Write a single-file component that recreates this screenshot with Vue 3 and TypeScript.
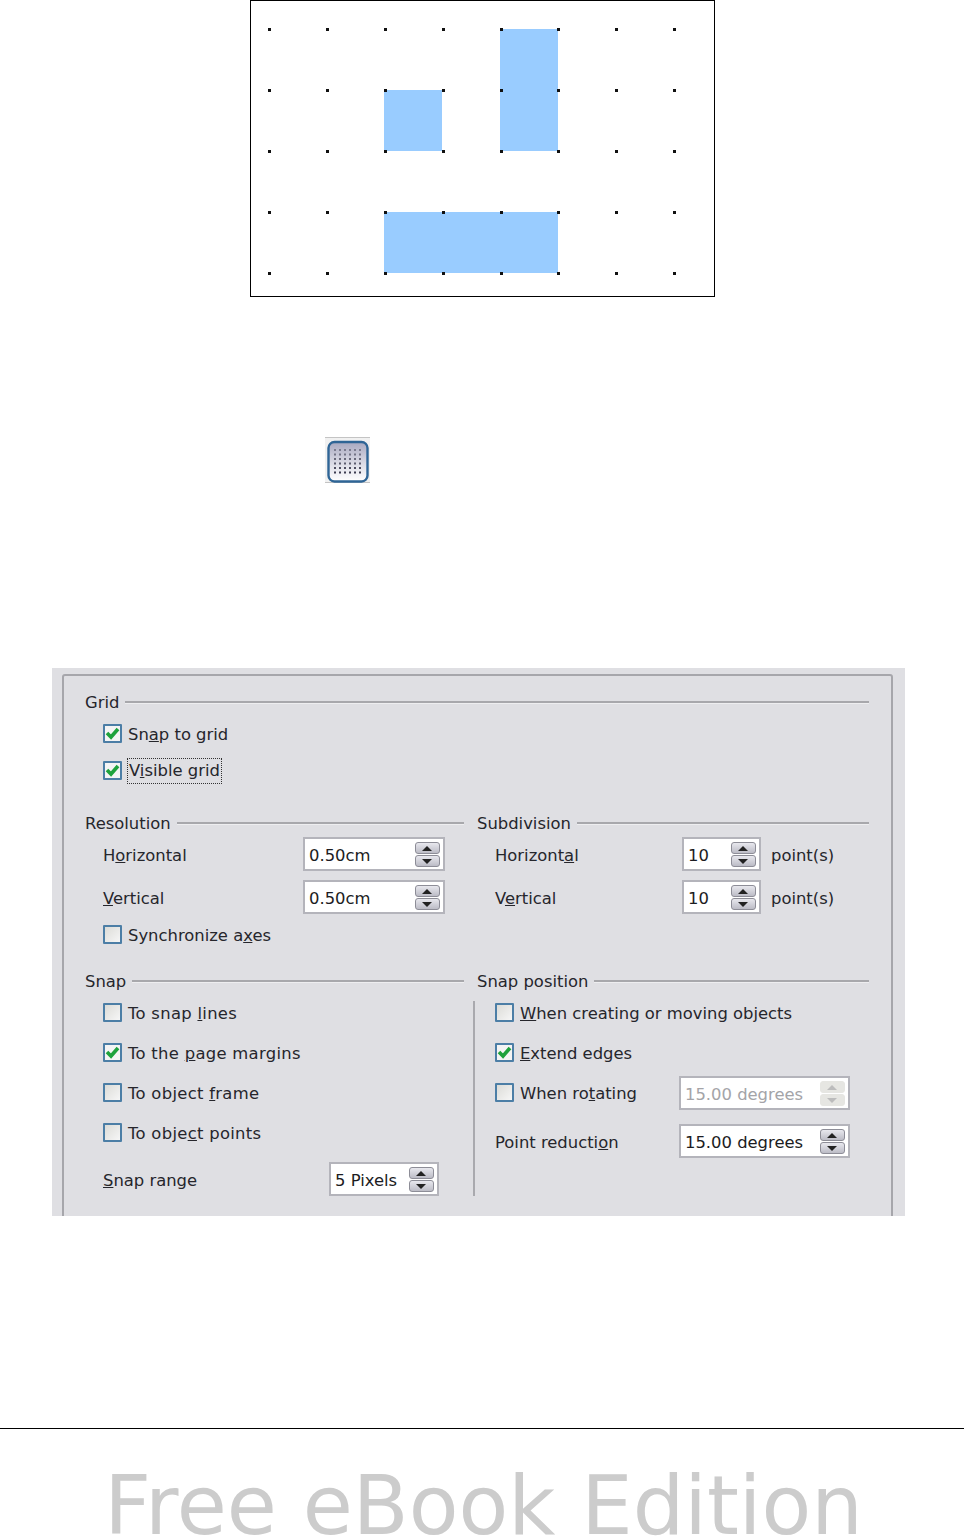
<template>
  <div class="page">
    <div class="figure">
      <svg viewBox="251 1 463 295" width="463" height="295" class="figure-svg">
        <rect x="384" y="90" width="58" height="61" fill="#99ccff" />
        <rect x="500" y="29" width="58" height="122" fill="#99ccff" />
        <rect x="384" y="212" width="174" height="61" fill="#99ccff" />
        <template v-for="y in dotRows" :key="y">
          <rect v-for="x in dotCols" :key="x" :x="x - 1" :y="y - 1" width="3" height="3" fill="#111" />
        </template>
      </svg>
    </div>

    <div class="tool-icon">
      <svg viewBox="0 0 45 46" width="45" height="46">
        <defs>
          <linearGradient id="iconFill" x1="0" y1="0" x2="0" y2="1">
            <stop offset="0" stop-color="#a8a8c0" />
            <stop offset="0.55" stop-color="#dcdce6" />
            <stop offset="1" stop-color="#ffffff" />
          </linearGradient>
        </defs>
        <rect x="0" y="0.5" width="45" height="45" fill="#f1f1f1" />
        <rect x="0" y="0" width="45" height="1" fill="#c4c4c4" />
        <rect x="0" y="45" width="45" height="1" fill="#c4c4c4" />
        <rect x="3.5" y="5" width="39" height="39.5" rx="6" fill="url(#iconFill)" stroke="#2f6596" stroke-width="2.4" />
        <template v-for="(y, i) in iconRows" :key="y">
          <rect v-for="x in iconCols" :key="x" :x="x" :y="y" width="2" height="2" fill="#3c3c50" :opacity="0.5 + i * 0.1" />
        </template>
      </svg>
    </div>

    <div class="dialog">
      <div class="frame">
        <div class="head"><span>Grid</span><i></i></div>
        <div class="grid-rows">
          <div class="check-row">
            <span class="box on"><svg viewBox="0 0 15 15"><path d="M2 7l4 4 7-8" /></svg></span>
            <span class="text">Sn<u>a</u>p to grid</span>
          </div>
          <div class="check-row">
            <span class="box on"><svg viewBox="0 0 15 15"><path d="M2 7l4 4 7-8" /></svg></span>
            <span class="text focused">V<u>i</u>sible grid</span>
          </div>
        </div>

        <div class="columns">
          <section>
            <div class="head"><span>Resolution</span><i></i></div>
            <div class="field-row first">
              <span class="label wide">H<u>o</u>rizontal</span>
              <span class="field res">0.50cm<span class="spin"><b class="up"></b><b class="down"></b></span></span>
            </div>
            <div class="field-row">
              <span class="label wide"><u>V</u>ertical</span>
              <span class="field res">0.50cm<span class="spin"><b class="up"></b><b class="down"></b></span></span>
            </div>
            <div class="check-row sync">
              <span class="box"></span>
              <span class="text">Synchronize a<u>x</u>es</span>
            </div>
          </section>

          <section>
            <div class="head"><span>Subdivision</span><i></i></div>
            <div class="field-row first">
              <span class="label sub">Horizont<u>a</u>l</span>
              <span class="field points">10<span class="spin"><b class="up"></b><b class="down"></b></span></span>
              <span class="unit">point(s)</span>
            </div>
            <div class="field-row">
              <span class="label sub">V<u>e</u>rtical</span>
              <span class="field points">10<span class="spin"><b class="up"></b><b class="down"></b></span></span>
              <span class="unit">point(s)</span>
            </div>
          </section>

          <section>
            <div class="head"><span>Snap</span><i></i></div>
            <div class="snap-rows">
              <div class="check-row tall"><span class="box"></span><span class="text to">To snap <u>l</u>ines</span></div>
              <div class="check-row tall">
                <span class="box on"><svg viewBox="0 0 15 15"><path d="M2 7l4 4 7-8" /></svg></span>
                <span class="text to">To the <u>p</u>age margins</span>
              </div>
              <div class="check-row tall"><span class="box"></span><span class="text to">To object <u>f</u>rame</span></div>
              <div class="check-row tall"><span class="box"></span><span class="text to">To obje<u>c</u>t points</span></div>
              <div class="field-row range">
                <span class="label range-label"><u>S</u>nap range</span>
                <span class="field pixels">5 Pixels<span class="spin"><b class="up"></b><b class="down"></b></span></span>
              </div>
            </div>
          </section>

          <section>
            <div class="head"><span>Snap position</span><i></i></div>
            <div class="snap-rows divided">
              <div class="check-row tall"><span class="box"></span><span class="text"><u>W</u>hen creating or moving objects</span></div>
              <div class="check-row tall">
                <span class="box on"><svg viewBox="0 0 15 15"><path d="M2 7l4 4 7-8" /></svg></span>
                <span class="text"><u>E</u>xtend edges</span>
              </div>
              <div class="check-row tall">
                <span class="box"></span>
                <span class="text rotating">When ro<u>t</u>ating</span>
                <span class="field degrees off">15.00 degrees<span class="spin"><b class="up"></b><b class="down"></b></span></span>
              </div>
              <div class="field-row reduction">
                <span class="label point">Point reducti<u>o</u>n</span>
                <span class="field degrees">15.00 degrees<span class="spin"><b class="up"></b><b class="down"></b></span></span>
              </div>
            </div>
          </section>
        </div>
      </div>
    </div>

    <div class="footer">
      <div class="edition">Free eBook Edition</div>
    </div>
  </div>
</template>

<script setup lang="ts">
const dotCols = [269, 327, 385, 443, 501, 558, 616, 674]
const dotRows = [29, 90, 151, 212, 273]

const iconCols = [9, 14, 19, 24, 29, 34]
const iconRows = [12, 16.5, 21, 25.5, 30, 34.5]
</script>

<style scoped>
.page {
  width: 964px;
  height: 1539px;
  overflow: hidden;
  background: #fff;
  font-family: "DejaVu Sans", sans-serif;
}

.figure {
  box-sizing: border-box;
  width: 465px;
  height: 297px;
  margin-left: 250px;
  border: 1px solid #000;
}

.figure-svg {
  display: block;
}

.tool-icon {
  width: 45px;
  height: 46px;
  margin: 140px 0 0 325px;
}

.tool-icon svg {
  display: block;
}

.dialog {
  box-sizing: border-box;
  width: 853px;
  height: 548px;
  margin: 185px 0 0 52px;
  padding: 6px 12px 0 10px;
  overflow: hidden;
  background: #dfdfe3;
  color: #26262c;
  font-size: 16.4px;
}

.frame {
  box-sizing: border-box;
  height: 560px;
  padding: 14px 22px 0 21px;
  border: 2px solid #a6a6ab;
  border-radius: 3px;
}

.head {
  display: flex;
  align-items: center;
  gap: 6px;
  height: 24px;
}

.head i {
  flex: 1;
  height: 3px;
  background: #a8a8ac;
  border-bottom: 1px solid #eeeef0;
  box-sizing: border-box;
}

.grid-rows {
  display: flex;
  flex-direction: column;
  gap: 1px;
  margin-top: 1px;
  padding-left: 18px;
}

.check-row {
  display: flex;
  align-items: center;
  gap: 6px;
  height: 36px;
  white-space: nowrap;
}

.text {
  padding-top: 2px;
}

.text.to {
  letter-spacing: 0.3px;
}

.box {
  box-sizing: border-box;
  flex: none;
  width: 19px;
  height: 19px;
  border: 2px solid #4c7ea6;
  border-radius: 1px;
  background: linear-gradient(135deg, #dcdcd8, #f6f6f6);
}

.box.on {
  background: #f4f4f4;
}

.box svg {
  display: block;
  width: 15px;
  height: 15px;
}

.box path {
  fill: none;
  stroke: #1ea23c;
  stroke-width: 3.6;
}

.focused {
  padding: 0 1px;
  outline: 1px dotted #333;
  line-height: 24px;
  margin-top: 2px;
}

.columns {
  display: grid;
  grid-template-columns: 379fr 392fr;
  column-gap: 13px;
  row-gap: 22px;
  margin-top: 23px;
}

.field-row {
  display: flex;
  align-items: center;
  margin-top: 9px;
  padding-left: 18px;
  white-space: nowrap;
}

.field-row.first {
  margin-top: 2px;
}

.label {
  padding-top: 2px;
}

.label.wide {
  width: 200px;
}

.label.sub {
  width: 187px;
}

.label.range-label {
  width: 226px;
}

.label.point {
  width: 184px;
}

.field {
  box-sizing: border-box;
  display: flex;
  flex: none;
  align-items: center;
  justify-content: space-between;
  height: 34px;
  padding: 2px 3px 0 4px;
  border: 2px solid #b4b4bb;
  background: #fff;
  color: #1c1c22;
}

.field.res {
  width: 142px;
}

.field.points {
  width: 79px;
}

.field.pixels {
  width: 110px;
}

.field.degrees {
  width: 171px;
}

.unit {
  margin-left: 10px;
  padding-top: 2px;
}

.spin {
  display: flex;
  flex: none;
  flex-direction: column;
  gap: 1px;
  width: 25px;
  margin-top: -2px;
}

.spin b {
  position: relative;
  box-sizing: border-box;
  display: block;
  height: 12px;
  border: 1px solid #8d8d97;
  border-radius: 3px;
  background: linear-gradient(#e8e8ee, #bcbcc6);
}

.spin b::after {
  content: "";
  position: absolute;
  left: 6px;
  width: 0;
  height: 0;
  border-left: 5.5px solid transparent;
  border-right: 5.5px solid transparent;
}

.spin .up::after {
  top: 3px;
  border-bottom: 5px solid #222;
}

.spin .down::after {
  top: 3px;
  border-top: 5px solid #222;
}

.field.off {
  color: #a4a4a8;
  margin-top: 2px;
  margin-left: 6px;
}

.field.off .spin b {
  border-color: #e6e6e2;
  background: #e6e6e2;
}

.field.off .spin .up::after {
  border-bottom-color: #bcbcbc;
}

.field.off .spin .down::after {
  border-top-color: #bcbcbc;
}

.check-row.sync {
  height: 25px;
  margin-top: 8px;
  padding-left: 18px;
}

.snap-rows {
  position: relative;
  margin-top: -1px;
  padding-left: 18px;
}

.snap-rows.divided::before {
  content: "";
  position: absolute;
  left: -4px;
  top: 9px;
  width: 2px;
  height: 195px;
  background: #a9a9ae;
}

.check-row.tall {
  height: 40px;
}

.rotating {
  width: 147px;
}

.field-row.range {
  margin-top: 10px;
  padding-left: 0;
}

.field-row.reduction {
  margin-top: 12px;
  padding-left: 0;
}

.footer {
  margin-top: 212px;
  border-top: 1px solid #000;
}

.edition {
  margin-top: 44px;
  padding-left: 3px;
  color: #cccccc;
  font-size: 81.4px;
  line-height: 66px;
  text-align: center;
  white-space: nowrap;
}
</style>
